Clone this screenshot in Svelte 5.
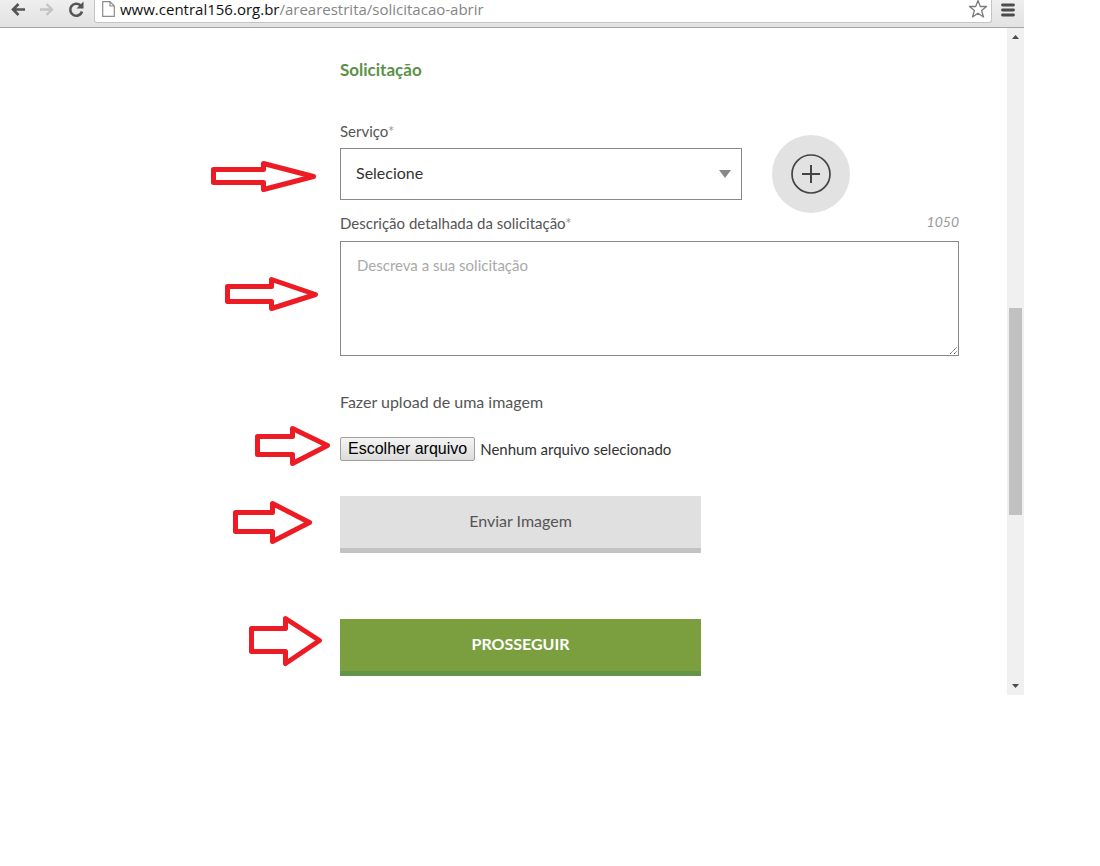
<script>
  const limit = 1050;
  let service = $state('');
  let description = $state('');
  let files = $state();
  let fileName = $derived(files?.[0]?.name ?? 'Nenhum arquivo selecionado');

  const arrows = [
    '213.5,169.5 263.5,169.5 263.5,163.5 313.5,176.5 263.5,189.5 263.5,182.5 213.5,182.5',
    '227.5,286.5 271.5,286.5 271.5,279.5 315.5,294.5 271.5,308.5 271.5,301.5 227.5,301.5',
    '257.5,436.5 292.5,436.5 292.5,428.5 327.5,445.5 292.5,463.5 292.5,454.5 257.5,454.5',
    '235.5,512.5 272.5,512.5 272.5,503.5 309.5,522.5 272.5,541.5 272.5,531.5 235.5,531.5',
    '251.5,628.5 285.5,628.5 285.5,618.5 319.5,640.5 285.5,663.5 285.5,651.5 251.5,651.5'
  ];
</script>

<div class="browser">
  <header class="toolbar">
    <nav class="nav" aria-label="Navegação">
      <button type="button" aria-label="Voltar">
        <svg width="18" height="18" viewBox="0 0 18 18"><path d="M16 9.500H4M9.500 4 4 9.500 9.500 15" fill="none" stroke="#555" stroke-width="2.600" /></svg>
      </button>
      <button type="button" aria-label="Avançar">
        <svg width="18" height="18" viewBox="0 0 18 18"><path d="M2 9.500h12M8.500 4 14 9.500 8.500 15" fill="none" stroke="#c4c4c4" stroke-width="2.400" /></svg>
      </button>
      <button type="button" aria-label="Recarregar">
        <svg width="18" height="18" viewBox="0 0 18 18"><path d="M13.500 5.500A6 6 0 1 0 15 11.500" fill="none" stroke="#555" stroke-width="2.600" /><path d="M16.500 1.500v7H9.500z" fill="#555" /></svg>
      </button>
    </nav>
    <div class="address">
      <svg width="13" height="16" viewBox="0 0 13 16"><path d="M.7.7h7.3l4.300 4.300v10.300H.7zM8 .7V5h4.300" fill="#fff" stroke="#8c8c8c" stroke-width="1.200" /></svg>
      <span class="url">www.central156.org.br<span class="path">/arearestrita/solicitacao-abrir</span></span>
      <button type="button" aria-label="Favoritar">
        <svg width="20" height="20" viewBox="0 0 20 20"><path d="m10 1.500 2.300 6h6.200l-4.900 4 1.900 6.500-5.500-3.800L4.500 18l1.900-6.500-4.900-4h6.200z" fill="#fff" stroke="#7c7c7c" stroke-width="1.300" stroke-linejoin="round" /></svg>
      </button>
    </div>
    <button class="menu" type="button" aria-label="Menu">
      <svg width="14" height="14" viewBox="0 0 14 14"><path d="M1.500 2h11M1.500 7h11M1.500 12h11" stroke="#4c4c4c" stroke-width="2.800" stroke-linecap="round" /></svg>
    </button>
  </header>

  <div class="view">
    <main>
      <form onsubmit={(e) => e.preventDefault()}>
        <h1>Solicitação</h1>

        <div class="service">
          <div class="field">
            <label for="service">Serviço<span class="req">*</span></label>
            <div class="select">
              <select id="service" bind:value={service}>
                <option value="">Selecione</option>
              </select>
              <svg class="caret" width="12" height="8" viewBox="0 0 12 8"><path d="M0 0h12L6 8z" fill="#888" /></svg>
            </div>
          </div>
          <button class="add" type="button" aria-label="Adicionar serviço">
            <svg width="40" height="40" viewBox="0 0 40 40" fill="none" stroke="#444"><circle cx="20" cy="20" r="19" stroke-width="1.700" /><path d="M20 11v18M11 20h18" stroke-width="2" /></svg>
          </button>
        </div>

        <div class="caption">
          <label for="description">Descrição detalhada da solicitação<span class="req">*</span></label>
          <output for="description">{limit - description.length}</output>
        </div>
        <div class="area">
          <textarea id="description" maxlength={limit} placeholder="Descreva a sua solicitação" bind:value={description}></textarea>
          <svg class="grip" width="9" height="9" viewBox="0 0 9 9"><path d="M1 8 8 1M5 8l3-3" stroke="#555" stroke-dasharray="1.400 .5" /></svg>
        </div>

        <p>Fazer upload de uma imagem</p>
        <div class="file">
          <input id="image" type="file" accept="image/*" bind:files />
          <label class="choose" for="image">Escolher arquivo</label>
          <span class="name">{fileName}</span>
        </div>

        <button class="action send" type="button">Enviar Imagem</button>
        <button class="action next" type="submit">PROSSEGUIR</button>
      </form>
    </main>
    <div class="scrollbar" aria-hidden="true">
      <svg width="7" height="4" viewBox="0 0 7 4"><path d="M0 4h7L3.500 0z" fill="#4c4c4c" /></svg>
      <div class="track"><div class="thumb"></div></div>
      <svg width="7" height="4" viewBox="0 0 7 4"><path d="M0 0h7L3.500 4z" fill="#4c4c4c" /></svg>
    </div>
  </div>

  <svg class="marks" width="340" height="690" viewBox="0 0 340 690" aria-hidden="true">
    {#each arrows as points}
      <polygon {points} />
    {/each}
  </svg>
</div>

<style>
  :global(body) {
    margin: 0;
    background: #fff;
  }
  .browser {
    position: relative;
    margin-right: 76px;
    font-family: Lato, 'Open Sans', sans-serif;
    font-size: 16px;
    line-height: 20px;
    color: #555;
  }
  .browser * {
    box-sizing: border-box;
  }
  button {
    padding: 0;
    border: 0;
    background: none;
    font: inherit;
    color: inherit;
    cursor: pointer;
  }
  svg {
    display: block;
  }

  .toolbar {
    display: flex;
    height: 28px;
    padding-right: 9px;
    border-bottom: 1px solid #a6a6a6;
    background: linear-gradient(#efefef, #e2e2e2);
  }
  .nav {
    display: flex;
    gap: 11px;
    height: 18px;
    padding: 0 9px 0 9px;
  }
  .address {
    flex: 1;
    display: flex;
    align-items: center;
    gap: 5px;
    height: 23px;
    padding: 0 3px 4px 7px;
    border: 1px solid #c4c4c4;
    border-top: 0;
    border-radius: 0 0 3px 3px;
    background: #fff;
  }
  .url {
    flex: 1;
    font-family: 'Open Sans', 'Noto Sans', sans-serif;
    font-size: 15px;
    color: #111;
  }
  .path {
    color: #858585;
  }
  .menu {
    height: 19px;
    margin-left: 9px;
  }

  .view {
    display: flex;
  }
  main {
    flex: 1;
    padding: 32px 48px 19px 340px;
  }
  h1 {
    margin: 0 0 41px;
    font-size: 17px;
    line-height: 20px;
    font-weight: 700;
    color: #5c9148;
  }
  .service {
    display: flex;
    align-items: flex-end;
    gap: 30px;
  }
  .field {
    width: 402px;
    padding-bottom: 13px;
  }
  label,
  textarea,
  .name {
    font-size: 15px;
  }
  .field label {
    display: block;
    margin-bottom: 7px;
  }
  .req {
    color: #999;
  }
  .select {
    position: relative;
  }
  select {
    display: block;
    width: 100%;
    height: 52px;
    padding: 0 40px 2px 15px;
    border: 1px solid #888;
    border-radius: 0;
    background: #fff;
    appearance: none;
    font: inherit;
    color: #333;
  }
  .caret {
    position: absolute;
    top: 22px;
    right: 11px;
    pointer-events: none;
  }
  .add {
    display: grid;
    place-items: center;
    width: 78px;
    height: 78px;
    border-radius: 50%;
    background: #e2e2e2;
  }
  .caption {
    display: flex;
    justify-content: space-between;
    margin-bottom: 8px;
  }
  output {
    font-size: 14px;
    line-height: 18px;
    font-style: italic;
    color: #999;
  }
  .area {
    position: relative;
    margin-bottom: 36px;
  }
  textarea {
    display: block;
    width: 100%;
    height: 115px;
    padding: 13px 16px;
    border: 1px solid #888;
    border-radius: 0;
    background: #fff;
    resize: none;
    font-family: inherit;
    line-height: 20px;
    color: #333;
  }
  textarea::placeholder {
    color: #a9a9a9;
  }
  .grip {
    position: absolute;
    right: 1px;
    bottom: 1px;
    pointer-events: none;
  }
  p {
    margin: 0 0 25px;
  }
  .file {
    display: flex;
    align-items: center;
    gap: 5px;
    margin-bottom: 35px;
    color: #333;
  }
  .file input {
    position: absolute;
    width: 1px;
    height: 1px;
    opacity: 0;
  }
  .choose {
    padding: 1px 7px;
    border: 1px solid #a0a0a0;
    border-radius: 2px;
    background: linear-gradient(#f4f4f4, #dcdcdc);
    font-family: 'Liberation Sans', Arial, sans-serif;
    font-size: 16px;
    line-height: 20px;
    color: #000;
  }
  .action {
    display: block;
    width: 361px;
    height: 57px;
    padding-bottom: 2px;
    border-bottom: 5px solid;
  }
  .send {
    margin-bottom: 66px;
    border-color: #c3c3c3;
    background: #e0e0e0;
  }
  .next {
    border-color: #64934a;
    background: #7b9f3f;
    font-weight: 700;
    color: #fff;
  }

  .scrollbar {
    display: flex;
    flex-direction: column;
    align-items: center;
    width: 17px;
    padding: 7px 0;
    background: #f0f0f0;
  }
  .track {
    flex: 1;
    display: flex;
    flex-direction: column;
    width: 13px;
    padding: 269px 0 169px;
  }
  .thumb {
    flex: 1;
    background: #c1c1c1;
  }

  .marks {
    position: absolute;
    top: 0;
    left: 0;
    pointer-events: none;
    fill: #fff;
    stroke: #ed1c24;
    stroke-width: 5;
    stroke-linejoin: round;
  }
</style>
